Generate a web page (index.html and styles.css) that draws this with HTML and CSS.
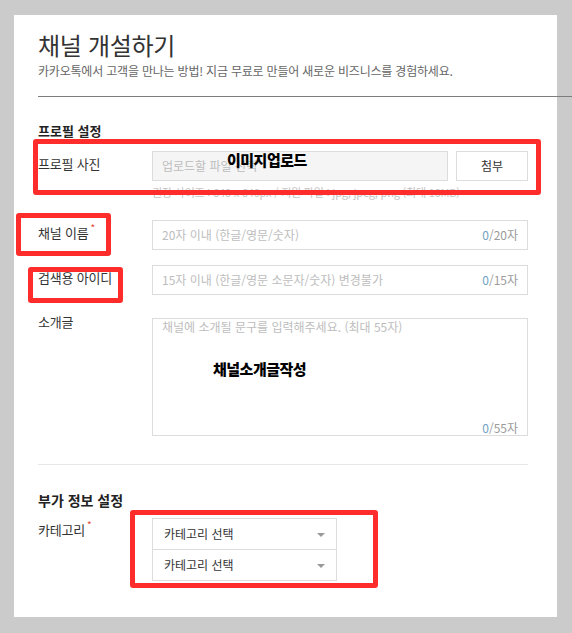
FILE: index.html
```html
<!DOCTYPE html>
<html lang="ko">
<head>
<meta charset="utf-8">
<title>채널 개설하기</title>
<link rel="stylesheet" href="styles.css">
</head>
<body>
<div class="page">
  <main class="card">
    <header class="head">
      <h1 class="title">채널 개설하기</h1>
      <p class="sub">카카오톡에서 고객을 만나는 방법! 지금 무료로 만들어 새로운 비즈니스를 경험하세요.</p>
    </header>
    <div class="rule"></div>

    <section class="sec">
      <h2 class="sec-title">프로필 설정</h2>

      <div class="row">
        <div class="label">프로필 사진</div>
        <div class="field">
          <div class="upload">
            <div class="box file">업로드할 파일 선택</div>
            <div class="btn">첨부</div>
          </div>
          <p class="help">권장 사이즈 : 640 x 640px / 지원 파일 : jpg, jpeg, png (최대 10MB)</p>
        </div>
      </div>

      <div class="row r-name">
        <div class="label">채널 이름<span class="req">*</span></div>
        <div class="field">
          <div class="box text"><span class="ph">20자 이내 (한글/영문/숫자)</span><span class="count"><em>0</em>/20자</span></div>
        </div>
      </div>

      <div class="row r-id">
        <div class="label">검색용 아이디<span class="req">*</span></div>
        <div class="field">
          <div class="box text"><span class="ph">15자 이내 (한글/영문 소문자/숫자) 변경불가</span><span class="count"><em>0</em>/15자</span></div>
        </div>
      </div>

      <div class="row r-intro">
        <div class="label">소개글</div>
        <div class="field">
          <div class="box area"><span class="ph">채널에 소개될 문구를 입력해주세요. (최대 55자)</span><span class="count"><em>0</em>/55자</span></div>
        </div>
      </div>
    </section>

    <div class="sep"></div>

    <section class="sec sec2">
      <h2 class="sec-title">부가 정보 설정</h2>
      <div class="row r-cat">
        <div class="label">카테고리<span class="req">*</span></div>
        <div class="field selects">
          <div class="select">카테고리 선택<span class="caret"></span></div>
          <div class="select">카테고리 선택<span class="caret"></span></div>
        </div>
      </div>
    </section>
  </main>

  <div class="mark m-photo"></div>
  <div class="mark m-name"></div>
  <div class="mark m-id"></div>
  <div class="mark m-cat"></div>
  <div class="note n-photo">이미지업로드</div>
  <div class="note n-intro">채널소개글작성</div>
</div>
</body>
</html>
```

FILE: styles.css
```css
* { box-sizing: border-box; }
html, body { margin: 0; padding: 0; }
body {
  background: #cbcbcb;
  font-family: "Noto Sans CJK KR", "Noto Sans", sans-serif;
  color: #333;
  width: 572px;
  height: 633px;
  overflow: hidden;
}
.page {
  position: relative;
  padding: 15px 15px 16px 14px;
}
.card {
  background: #fff;
  padding: 14px 29px 36px 24px;
}
.title {
  margin: 0;
  font-size: 24px;
  line-height: 32px;
  font-weight: 400;
  color: #333;
  letter-spacing: -0.3px;
}
.sub {
  margin: 1px 0 0;
  font-size: 12px;
  line-height: 18px;
  color: #666;
  letter-spacing: -0.2px;
}
.rule {
  margin: 16px -44px 0 0;
  height: 1px;
  background: #7d7d7d;
}
.sec-title {
  margin: 24px 0 0;
  font-size: 13px;
  line-height: 20px;
  font-weight: 700;
  color: #222;
}
.row {
  display: flex;
  align-items: flex-start;
  margin-top: 10px;
}
.label {
  width: 114px;
  height: 30px;
  flex: none;
  font-size: 13px;
  line-height: 26px;
  color: #333;
  letter-spacing: -0.2px;
}
.req {
  position: relative;
  top: -6px;
  color: #e04a3a;
  font-size: 10px;
  line-height: 0;
  margin-left: 2px;
}
.field { flex: 1; min-width: 0; }
.upload { display: flex; gap: 8px; }
.box {
  border: 1px solid #dcdcdc;
  height: 30px;
  font-size: 12px;
  line-height: 28px;
  color: #bdbdbd;
  padding: 0 9px;
}
.file { flex: 1; background: #f5f5f5; }
.btn {
  width: 72px;
  height: 30px;
  border: 1px solid #dcdcdc;
  background: #fff;
  font-size: 12px;
  line-height: 28px;
  text-align: center;
  color: #333;
}
.help {
  margin: 3px 0 0;
  font-size: 11px;
  line-height: 16px;
  color: #c4c4c4;
  letter-spacing: -0.2px;
}
.text {
  display: flex;
  justify-content: space-between;
}
.count { color: #9a9a9a; font-size: 12px; }
.count em { font-style: normal; color: #6ea2c4; }
.r-name { margin-top: 20px; }
.r-id { margin-top: 15px; }
.r-intro { margin-top: 23px; }
.area {
  height: 118px;
  position: relative;
  padding: 0 9px;
}
.area .ph { display: block; line-height: 14px; padding-top: 1px; }
.r-intro .label { line-height: 14px; height: auto; margin-top: -3px; }
.area .count {
  position: absolute;
  right: 9px;
  bottom: 0;
  line-height: 14px;
}
.sep {
  margin-top: 28px;
  height: 1px;
  background: #e8e8e8;
}
.sec2 .sec-title { margin-top: 25px; font-size: 14px; }
.r-cat { margin-top: 8px; }
.r-cat .label { line-height: 24px; }
.selects { flex: none; width: 185px; }
.select {
  position: relative;
  height: 32px;
  border: 1px solid #dcdcdc;
  font-size: 12px;
  line-height: 30px;
  padding: 0 11px;
  color: #333;
}
.select + .select { margin-top: -1px; }
.caret {
  position: absolute;
  right: 11px;
  top: 14px;
  width: 0;
  height: 0;
  border-left: 4px solid transparent;
  border-right: 4px solid transparent;
  border-top: 4px solid #999;
}
.mark {
  position: absolute;
  border: 5px solid #ff2c2c;
  border-radius: 3px;
}
.m-photo { left: 33px; top: 139px; width: 508px; height: 56px; }
.m-name { left: 16px; top: 213px; width: 95px; height: 43px; }
.m-id { left: 28px; top: 267px; width: 95px; height: 36px; }
.m-cat { left: 130px; top: 510px; width: 248px; height: 78px; }
.note {
  position: absolute;
  font-size: 15px;
  line-height: 18px;
  font-weight: 900;
  color: #000;
  letter-spacing: -0.5px;
}
.n-photo { left: 227px; top: 151px; }
.n-intro { left: 213px; top: 360px; }
```
